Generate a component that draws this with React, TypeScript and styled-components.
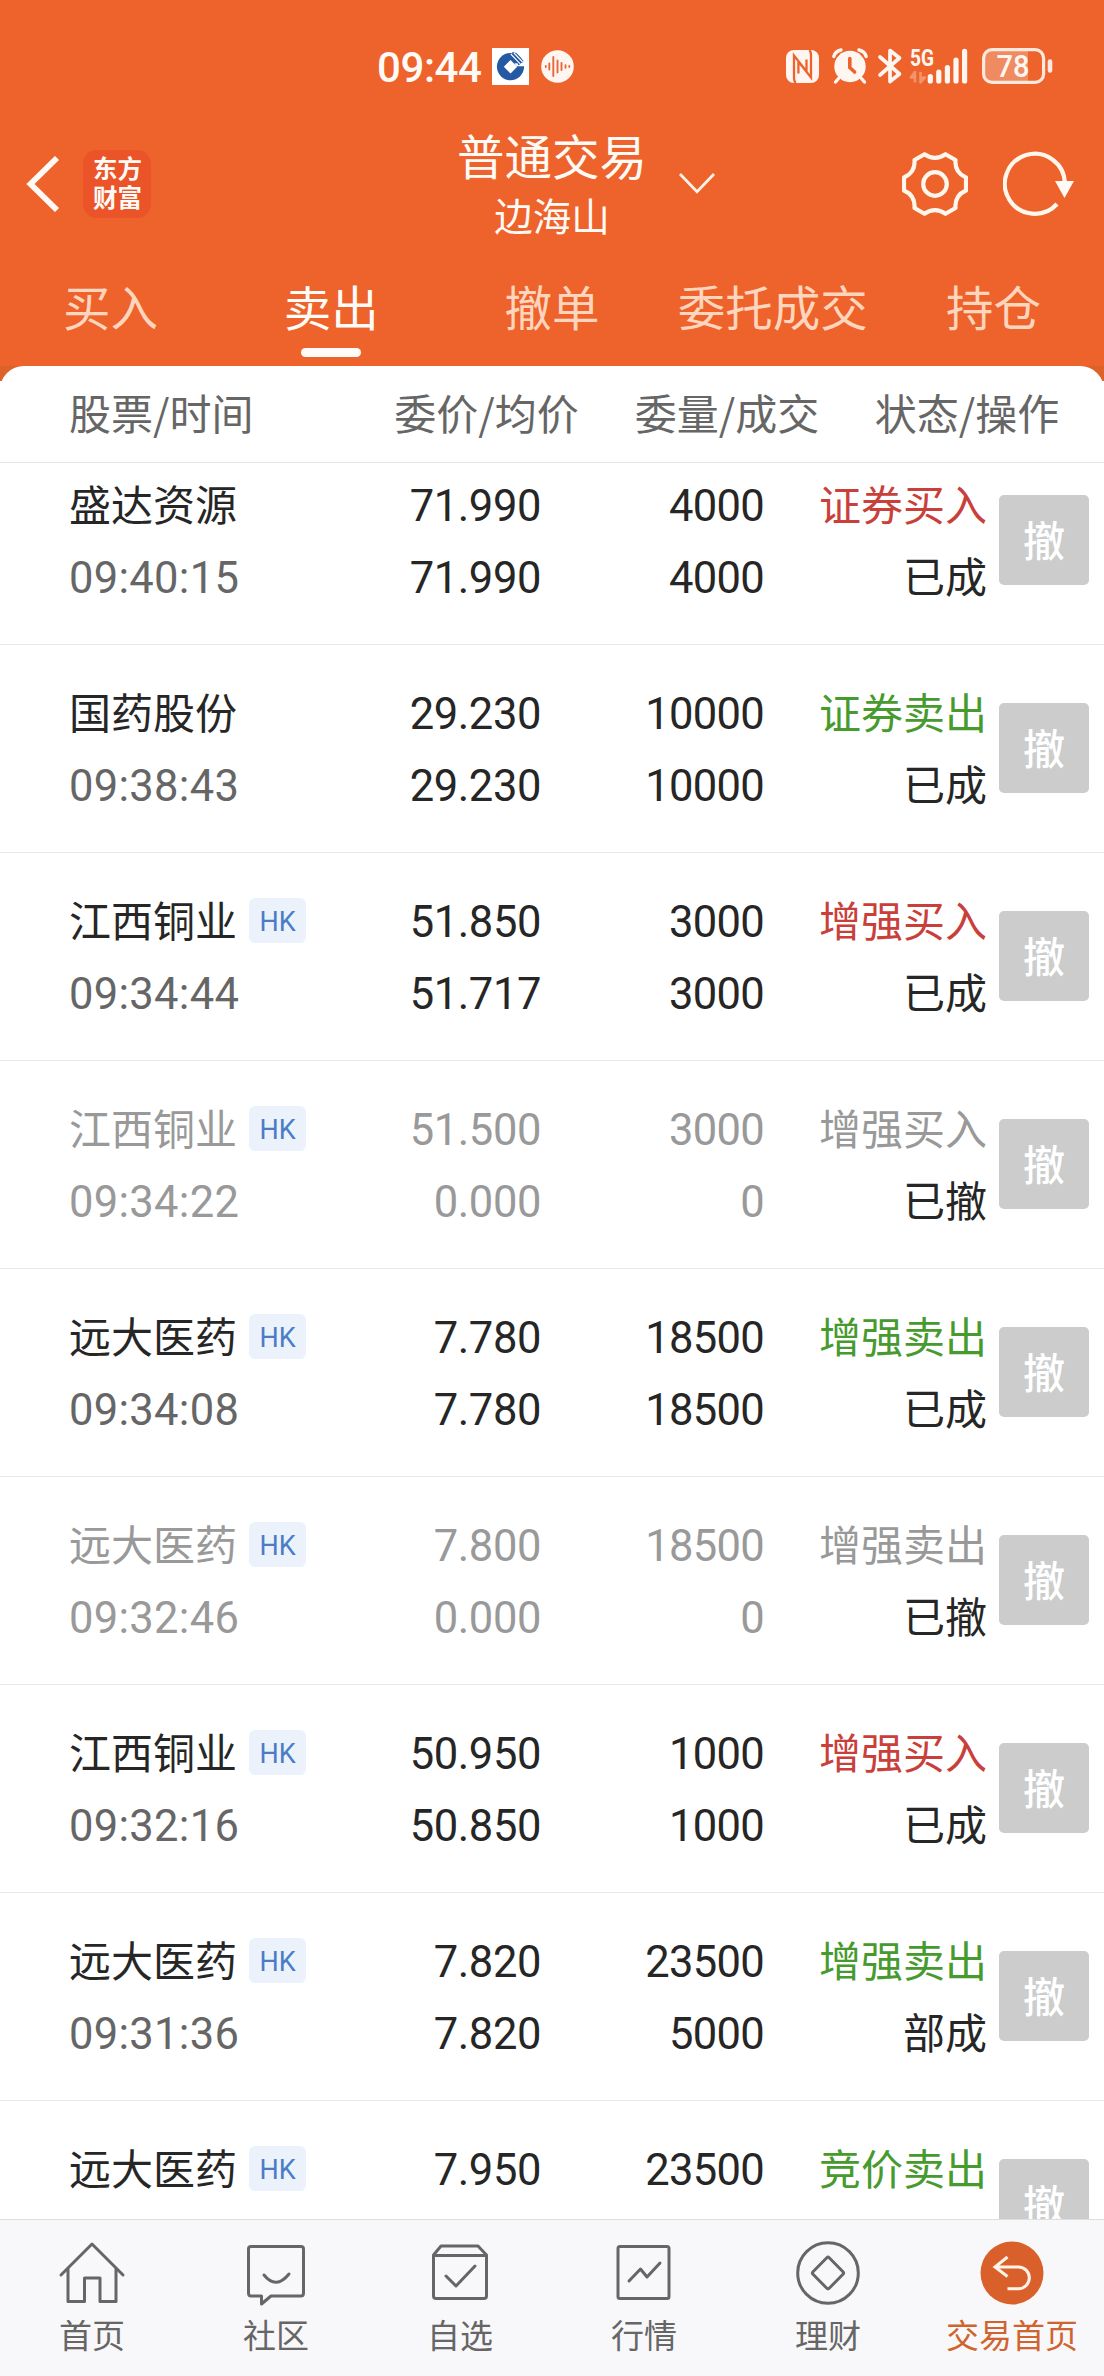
import React from "react";
import styled, { createGlobalStyle, css } from "styled-components";

const cjk = `"Noto Sans CJK SC", sans-serif`;
const num = `Roboto, "Noto Sans CJK SC", sans-serif`;

const Global = createGlobalStyle`
  * { box-sizing: border-box; }
  body { margin: 0; background: #fff; font-family: ${cjk}; }
  button { border: 0; padding: 0; background: none; font: inherit; color: inherit; display: flex; }
`;

const Screen = styled.div`
  width: 1104px;
  height: 2376px;
  display: flex;
  flex-direction: column;
  overflow: hidden;
  background: #fff;
`;

const Header = styled.header`
  height: 366px;
  flex: none;
  background: #ed632b;
  color: #fffaf5;
  display: flex;
  flex-direction: column;
`;

const StatusBar = styled.div`
  height: 132px;
  padding: 0 51px 0 377px;
  display: flex;
  align-items: center;
  justify-content: space-between;
`;

const StatusGroup = styled.div`
  display: flex;
  align-items: center;
  svg { display: block; flex: none; overflow: visible; }
`;

const Clock = styled.span`
  width: 115px;
  font: 500 42px/48px ${num};
  letter-spacing: -0.4px;
  padding-top: 3px;
  white-space: nowrap;
`;

const TitleBar = styled.div`
  height: 104px;
  display: grid;
  grid-template-columns: 368px 368px 368px;
  grid-template-rows: 104px;
  svg { display: block; flex: none; }
`;

const TitleLeft = styled.div`
  display: flex;
  align-items: center;
  gap: 23px;
  padding-left: 26px;
`;

const Brand = styled.div`
  width: 68px;
  height: 68px;
  border-radius: 14px;
  background: #ea5428;
  font: 700 24.5px/29px ${cjk};
  text-align: center;
  padding: 3px 0 0 1px;
`;

const TitleCenter = styled.div`
  display: flex;
  align-items: center;
  justify-content: center;
  gap: 32px;
  padding-left: 68px;
`;

const TitleText = styled.div`
  display: flex;
  flex-direction: column;
  align-items: center;
  white-space: nowrap;
`;

const Title = styled.div`
  font-size: 47.5px;
  line-height: 60px;
`;

const Subtitle = styled.div`
  font-size: 38.5px;
  line-height: 58px;
`;

const TitleRight = styled.div`
  display: flex;
  align-items: center;
  justify-content: flex-end;
  gap: 35px;
  padding-right: 27px;
`;

const Tabs = styled.nav`
  height: 130px;
  display: grid;
  grid-template-columns: repeat(5, 1fr);
`;

const Tab = styled.button<{ $active?: boolean }>`
  flex-direction: column;
  align-items: center;
  font-size: 47.5px;
  line-height: 70px;
  padding-top: 35px;
  color: ${(p) => (p.$active ? "#fffcf7" : "#ffd5bd")};
  &::after {
    content: "";
    width: 60px;
    height: 9px;
    margin-top: 7px;
    border-radius: 5px;
    background: ${(p) => (p.$active ? "#fffcf7" : "transparent")};
  }
`;

const PanelBack = styled.div`
  flex: none;
  height: 97px;
  background: linear-gradient(#dc6229 15px, #fff 15px);
`;

const ColumnHead = styled.div`
  height: 97px;
  border-bottom: 1px solid #e6e6e6;
  border-radius: 24px 24px 0 0;
  background: #fff;
  display: grid;
  grid-template-columns: 366px 241px 240px 240px;
  align-items: center;
  color: #666;
  font-size: 42px;
  line-height: 60px;
  text-align: center;
`;

const HeadCell = styled.span<{ $first?: boolean }>`
  ${(p) => p.$first && css`text-align: left; padding-left: 69px;`}
  padding-bottom: 4px;
  white-space: nowrap;
`;

const List = styled.main`
  flex: none;
  height: 1756px;
  overflow: hidden;
`;

const Track = styled.div`
  margin-top: -26px;
`;

const Row = styled.div<{ $dim?: boolean }>`
  height: 208px;
  padding-bottom: 1px;
  border-bottom: 1px solid #e9e9e9;
  display: grid;
  grid-template-columns: 340px 201px 223px 223px 90px;
  align-items: center;
  color: ${(p) => (p.$dim ? "#999" : "#262626")};
`;

const Cell = styled.div<{ $right?: boolean }>`
  height: 144px;
  display: flex;
  flex-direction: column;
  ${(p) => (p.$right ? css`align-items: flex-end;` : css`padding-left: 69px;`)}
`;

const Line = styled.div<{ $tone?: string }>`
  height: 72px;
  display: flex;
  align-items: center;
  font-size: 42px;
  white-space: nowrap;
  ${(p) => p.$tone && css`color: ${p.$tone};`}
`;

const Label = styled.span`
  line-height: 60px;
  padding-bottom: 2px;
`;

const Digits = styled.span<{ $spacing: number }>`
  font: 400 43.5px/60px ${num};
  letter-spacing: ${(p) => p.$spacing}px;
  padding-top: 5px;
`;

const Market = styled.span`
  width: 57px;
  height: 45px;
  margin-left: 12px;
  border-radius: 6px;
  background: #ebf2fc;
  color: #4c7cc4;
  font: 400 27px/48px ${num};
  text-align: center;
`;

const Cancel = styled.button`
  width: 90px;
  height: 90px;
  margin-left: 12px;
  border-radius: 5px;
  background: #ccc;
  color: #fff;
  font-size: 42px;
  font-weight: 500;
  line-height: 88px;
  justify-content: center;
`;

const NavBar = styled.nav`
  flex: none;
  height: 157px;
  border-top: 1px solid #dfdfdf;
  background: #f8f8fa;
  display: grid;
  grid-template-columns: repeat(6, 1fr);
`;

const NavItem = styled.button<{ $active?: boolean }>`
  flex-direction: column;
  align-items: center;
  color: ${(p) => (p.$active ? "#d0642e" : "#666")};
  font-size: 33px;
  line-height: 48px;
  padding-top: 18px;
  white-space: nowrap;
  svg { display: block; }
`;

const NavIcon = ({ children }: { children: React.ReactNode }) => (
  <svg width="72" height="72" viewBox="0 0 72 72" fill="none" stroke="#666" strokeWidth="3" strokeLinejoin="round" strokeLinecap="round">
    {children}
  </svg>
);

const BankIcon = () => (
  <svg width="37" height="37" viewBox="0 0 37 37">
    <rect width="37" height="37" fill="#fff" />
    <circle cx="18.5" cy="18.6" r="13.6" fill="#2559a4" />
    <path d="M18.5 12L25.2 18.7L18.5 25.4L11.8 18.7Z" fill="#fff" />
    <path d="M22.3 15.6L28.5 14.8L34 13.8V18.3H24.8Z" fill="#fff" />
    <path d="M20 4L24.5 5L31.5 13L26.5 17.5" fill="#2559a4" />
    <path d="M18.8 6L28.2 15.8M22 5L30.6 14" stroke="#fff" strokeWidth="1.1" />
  </svg>
);

const VoiceIcon = () => (
  <svg width="33" height="33" viewBox="0 0 33 33" style={{ marginLeft: 12 }}>
    <circle cx="16.5" cy="16.5" r="16.3" fill="#fff6f2" />
    <path d="M4.8 16v1M8.3 13.5v6M12.3 7v19M16.5 10.5v12M20.5 13v7M24.5 15.3v2.4M28.3 16v1" stroke="#e8673a" strokeWidth="1.9" strokeLinecap="round" />
  </svg>
);

const NfcIcon = () => (
  <svg width="33" height="33" viewBox="0 0 33 33">
    <rect width="33" height="33" rx="8" fill="#fff6f2" />
    <path d="M9.5 33Q8 31 8 28V5.5L20.5 21.5V9.5M23.5 0Q25 2 25 5V27.5L12.4 11.5V23.5" fill="none" stroke="#ed632b" strokeWidth="2.3" />
  </svg>
);

const AlarmIcon = () => (
  <svg width="36" height="36" viewBox="0 0 36 36" style={{ marginLeft: 13 }}>
    <circle cx="18" cy="18.5" r="15.7" fill="#fff6f2" />
    <path d="M1.8 8.5Q3.5 3 9 2M34.2 8.5Q32.5 3 27 2M6.5 30.5L3.5 34M29.5 30.5L32.5 34" stroke="#fff6f2" strokeWidth="3.4" strokeLinecap="round" fill="none" />
    <path d="M17.8 10.5V19.5L22.6 24" stroke="#ed632b" strokeWidth="3.6" fill="none" strokeLinecap="round" />
  </svg>
);

const BluetoothIcon = () => (
  <svg width="24" height="36" viewBox="0 0 24 36" style={{ marginLeft: 10 }}>
    <path d="M2 9L21.5 26L12 33.5V2.5L21.5 10L2 27" fill="none" stroke="#fff6f2" strokeWidth="3.7" strokeLinejoin="round" strokeLinecap="round" />
  </svg>
);

const SignalIcon = () => (
  <svg width="60" height="36" viewBox="0 0 60 36" style={{ marginLeft: 8 }}>
    <text x="0" y="17.5" fontFamily="Roboto, sans-serif" fontWeight="700" fontSize="23" textLength="24" lengthAdjust="spacingAndGlyphs" fill="#fff6f2">5G</text>
    <path d="M5 34.5V24L0.8 29.5H5M10.5 24V34.5L15 29.5H10.5" stroke="#f4936c" strokeWidth="2.6" fill="#f4936c" strokeLinejoin="round" />
    <path d="M20.3 28.5v4.4M28.8 24v8.9M37.4 19.5v13.4M46 12v20.9M54.6 3.3v29.6" stroke="#fff6f2" strokeWidth="5.2" strokeLinecap="round" />
  </svg>
);

const BatteryIcon = () => (
  <svg width="71" height="36" viewBox="0 0 71 36" style={{ marginLeft: 12 }}>
    <path d="M9 2H46V34H9Q2 34 2 27V9Q2 2 9 2Z" fill="#f08b61" />
    <rect x="1.6" y="1.6" width="60" height="32.8" rx="8.5" fill="none" stroke="#ffe9df" strokeWidth="3.2" />
    <path d="M68 13.5v9" stroke="#ffe9df" strokeWidth="4.6" strokeLinecap="round" />
    <text x="14.5" y="29" fontFamily="Roboto, sans-serif" fontWeight="500" fontSize="32" textLength="33" lengthAdjust="spacingAndGlyphs" fill="#fff6f2">78</text>
  </svg>
);

const BackIcon = () => (
  <svg width="34" height="56" viewBox="0 0 34 56" fill="none" stroke="#fffaf5" strokeWidth="5.8">
    <path d="M31 2L4.5 28L31 54" />
  </svg>
);

const ChevronIcon = () => (
  <svg width="36" height="22" viewBox="0 0 36 22" fill="none" stroke="#fff3e8" strokeWidth="2.8">
    <path d="M1 1L18 18.8L35 1" />
  </svg>
);

const GearIcon = () => (
  <svg width="66" height="66" viewBox="-33 -33 66 66" fill="none" stroke="#fff6ec" strokeWidth="4.2" strokeLinejoin="round">
    <path d="M-10.5 -29.8 Q0 -22.5 10.5 -29.8 L20.5 -24 Q19.5 -11.5 31 -6.5 V6.5 Q19.5 11.5 20.5 24 L10.5 29.8 Q0 22.5 -10.5 29.8 L-20.5 24 Q-19.5 11.5 -31 6.5 V-6.5 Q-19.5 -11.5 -20.5 -24 Z" />
    <circle r="11.8" />
  </svg>
);

const RefreshIcon = () => (
  <svg width="74" height="66" viewBox="0 0 74 66" fill="none" stroke="#fff6ec" strokeWidth="4.2">
    <path d="M54 53A30 30 0 1 1 61.8 32" />
    <path d="M52 30H71L61.5 47Z" fill="#fffaf5" stroke="none" />
  </svg>
);

type Order = {
  name: string;
  time?: string;
  hk?: boolean;
  price: string[];
  qty: string[];
  action: string;
  state?: string;
};

const orders: Order[] = [
  { name: "盛达资源", time: "09:40:15", price: ["71.990", "71.990"], qty: ["4000", "4000"], action: "证券买入", state: "已成" },
  { name: "国药股份", time: "09:38:43", price: ["29.230", "29.230"], qty: ["10000", "10000"], action: "证券卖出", state: "已成" },
  { name: "江西铜业", time: "09:34:44", hk: true, price: ["51.850", "51.717"], qty: ["3000", "3000"], action: "增强买入", state: "已成" },
  { name: "江西铜业", time: "09:34:22", hk: true, price: ["51.500", "0.000"], qty: ["3000", "0"], action: "增强买入", state: "已撤" },
  { name: "远大医药", time: "09:34:08", hk: true, price: ["7.780", "7.780"], qty: ["18500", "18500"], action: "增强卖出", state: "已成" },
  { name: "远大医药", time: "09:32:46", hk: true, price: ["7.800", "0.000"], qty: ["18500", "0"], action: "增强卖出", state: "已撤" },
  { name: "江西铜业", time: "09:32:16", hk: true, price: ["50.950", "50.850"], qty: ["1000", "1000"], action: "增强买入", state: "已成" },
  { name: "远大医药", time: "09:31:36", hk: true, price: ["7.820", "7.820"], qty: ["23500", "5000"], action: "增强卖出", state: "部成" },
  { name: "远大医药", hk: true, price: ["7.950"], qty: ["23500"], action: "竞价卖出" },
];

const OrderRow = ({ order }: { order: Order }) => {
  const dim = order.state === "已撤";
  const tone = dim ? "#999" : order.action.endsWith("买入") ? "#c9403a" : "#479a2e";
  return (
    <Row $dim={dim}>
      <Cell>
        <Line>
          <Label>{order.name}</Label>
          {order.hk && <Market>HK</Market>}
        </Line>
        {order.time && <Line $tone={dim ? "#999" : "#666"}><Digits $spacing={0.3}>{order.time}</Digits></Line>}
      </Cell>
      <Cell $right>
        {order.price.map((v, i) => <Line key={i}><Digits $spacing={-0.4}>{v}</Digits></Line>)}
      </Cell>
      <Cell $right>
        {order.qty.map((v, i) => <Line key={i}><Digits $spacing={-0.7}>{v}</Digits></Line>)}
      </Cell>
      <Cell $right>
        <Line $tone={tone}><Label>{order.action}</Label></Line>
        {order.state && <Line $tone="#262626"><Label>{order.state}</Label></Line>}
      </Cell>
      <Cancel>撤</Cancel>
    </Row>
  );
};

export default function App() {
  return (
    <>
      <Global />
      <Screen>
        <Header>
          <StatusBar>
            <StatusGroup>
              <Clock>09:44</Clock>
              <BankIcon />
              <VoiceIcon />
            </StatusGroup>
            <StatusGroup>
              <NfcIcon />
              <AlarmIcon />
              <BluetoothIcon />
              <SignalIcon />
              <BatteryIcon />
            </StatusGroup>
          </StatusBar>
          <TitleBar>
            <TitleLeft>
              <BackIcon />
              <Brand>东方<br />财富</Brand>
            </TitleLeft>
            <TitleCenter>
              <TitleText>
                <Title>普通交易</Title>
                <Subtitle>边海山</Subtitle>
              </TitleText>
              <ChevronIcon />
            </TitleCenter>
            <TitleRight>
              <GearIcon />
              <RefreshIcon />
            </TitleRight>
          </TitleBar>
          <Tabs>
            <Tab>买入</Tab>
            <Tab $active>卖出</Tab>
            <Tab>撤单</Tab>
            <Tab>委托成交</Tab>
            <Tab>持仓</Tab>
          </Tabs>
        </Header>
        <PanelBack>
          <ColumnHead>
            <HeadCell $first>股票/时间</HeadCell>
            <HeadCell>委价/均价</HeadCell>
            <HeadCell>委量/成交</HeadCell>
            <HeadCell>状态/操作</HeadCell>
          </ColumnHead>
        </PanelBack>
        <List>
          <Track>
            {orders.map((o, i) => <OrderRow key={i} order={o} />)}
          </Track>
        </List>
        <NavBar>
          <NavItem>
            <NavIcon>
              <path d="M5 37L36 6L67 37" />
              <path d="M12 31V63.5H28.5V40H44V63.5H60V31" />
            </NavIcon>
            首页
          </NavItem>
          <NavItem>
            <NavIcon>
              <path d="M11 8.5H61Q63.5 8.5 63.5 11V55Q63.5 58 61 58H31L21.5 66V58H11Q8.5 58 8.5 55V11Q8.5 8.5 11 8.5Z" />
              <path d="M24 37Q36 52 49 36" />
            </NavIcon>
            社区
          </NavItem>
          <NavItem>
            <NavIcon>
              <path d="M9.5 17L17 8H54L62.5 17V58Q62.5 60.5 60 60.5H12Q9.5 60.5 9.5 58ZM9.5 17.5H62.5" />
              <path d="M22 38L32 48L51 28" />
            </NavIcon>
            自选
          </NavItem>
          <NavItem>
            <NavIcon>
              <rect x="10" y="8.5" width="51" height="52" rx="2" />
              <path d="M21 43L32.5 31L39 39L52 25" />
            </NavIcon>
            行情
          </NavItem>
          <NavItem>
            <NavIcon>
              <circle cx="36" cy="35" r="30.3" />
              <path d="M34.8 19.8Q36 18.6 37.2 19.8L51 33.8Q52.2 35 51 36.2L37.2 50.2Q36 51.4 34.8 50.2L21 36.2Q19.8 35 21 33.8Z" />
            </NavIcon>
            理财
          </NavItem>
          <NavItem $active>
            <NavIcon>
              <circle cx="36" cy="35" r="31.5" fill="#d9602b" stroke="none" />
              <path d="M31.5 19L19 29L31.5 38.5M20 29H42.5A10.8 10.8 0 0 1 42.5 50.7H31.5" stroke="#fff3e8" strokeLinejoin="miter" strokeLinecap="butt" />
            </NavIcon>
            交易首页
          </NavItem>
        </NavBar>
      </Screen>
    </>
  );
}
